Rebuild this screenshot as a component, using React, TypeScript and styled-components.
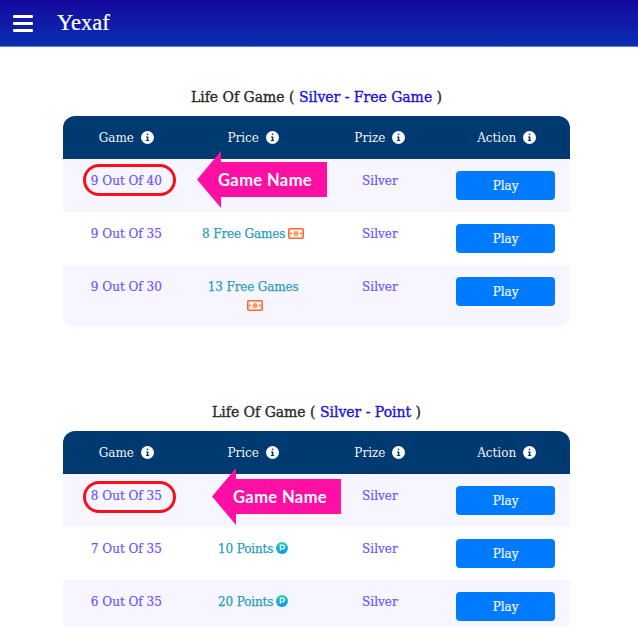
import styled, { createGlobalStyle } from "styled-components";

const GlobalStyle = createGlobalStyle`
  html, body {
    margin: 0;
    height: 100%;
    overflow: hidden;
    background: #fff;
    font-family: "DejaVu Serif", "Liberation Serif", serif;
  }
`;

const Header = styled.header`
  height: 46px;
  display: flex;
  align-items: center;
  gap: 24px;
  padding: 0 13px;
  color: #fff;
  background: linear-gradient(180deg, #13079d 0%, #0b30b2 100%);
  border-bottom: 1px solid #5f7fd6;
`;

const Burger = styled.div`
  width: 20px;
  display: flex;
  flex-direction: column;
  gap: 4px;
  span {
    height: 3px;
    border-radius: 1px;
    background: #fff;
  }
`;

const Brand = styled.div`
  font-family: "Liberation Serif", serif;
  font-size: 22.5px;
  line-height: 1;
  -webkit-text-stroke: 0.2px #fff;
`;

const Main = styled.main`
  padding: 40px 68px 0 63px;
  display: flex;
  flex-direction: column;
  gap: 75px;
`;

const Title = styled.h2`
  margin: 0 0 9px;
  height: 20px;
  font-size: 14px;
  font-weight: 500;
  line-height: 20px;
  letter-spacing: -0.02px;
  text-align: center;
  color: #2b2b2b;
  -webkit-text-stroke: 0.35px #2b2b2b;
  b {
    font-weight: 500;
    color: #1a12e0;
    -webkit-text-stroke: 0.35px #1a12e0;
  }
`;

const Table = styled.div`
  border-radius: 12px;
  overflow: hidden;
`;

const HeadRow = styled.div`
  height: 43px;
  display: grid;
  grid-template-columns: repeat(4, 1fr);
  align-items: center;
  background: #003a70;
  color: #f0f4f8;
  font-size: 12px;
`;

const HeadCell = styled.div`
  display: flex;
  justify-content: center;
  align-items: center;
  gap: 7px;
`;

const Row = styled.div<{ $odd: boolean; $height: number }>`
  position: relative;
  height: ${({ $height }) => $height}px;
  display: grid;
  grid-template-columns: repeat(4, 1fr);
  background: ${({ $odd }) => ($odd ? "#f7f5ff" : "#fff")};
  font-size: 12px;
`;

const Cell = styled.div`
  padding: 14px 10px 0;
  line-height: 16px;
  text-align: center;
  color: #6a55ff;
  -webkit-text-stroke: 0.2px #6a55ff;
`;

const GameCell = styled(Cell)`
  position: relative;
`;

const Price = styled(Cell)`
  padding-top: 13px;
  line-height: 19px;
  letter-spacing: -0.15px;
  color: #2a9cbb;
  -webkit-text-stroke: 0.25px #2a9cbb;
`;

const ActionCell = styled.div`
  display: flex;
  justify-content: center;
  padding: 12px 2px 0 0;
`;

const PlayButton = styled.button`
  width: 99px;
  height: 29px;
  border: none;
  border-radius: 4px;
  background: #007bff;
  color: #f2f7ff;
  font-family: inherit;
  font-size: 12px;
  padding: 0;
  -webkit-text-stroke: 0.2px #f2f7ff;
`;

const Oval = styled.div<{ $top: number }>`
  position: absolute;
  left: 20px;
  top: ${({ $top }) => $top}px;
  width: 87px;
  height: 26px;
  border: 3px solid #f5101a;
  border-radius: 16px;
`;

const Arrow = styled.div<{ $left: number; $width: number; $top: number }>`
  position: absolute;
  left: ${({ $left }) => $left}px;
  top: ${({ $top }) => $top}px;
  width: ${({ $width }) => $width}px;
  height: 57px;
  padding-left: 21px;
  box-sizing: border-box;
  display: flex;
  align-items: center;
  background: #ff0fa3;
  clip-path: polygon(0 50%, 24px 0, 24px 11px, 100% 11px, 100% 46px, 24px 46px, 24px 100%);
  color: #fff;
  font-family: "Lato", sans-serif;
  font-size: 16.5px;
  font-weight: 700;
  letter-spacing: 0.4px;
`;

const IconWrap = styled.svg`
  display: inline-block;
  vertical-align: -2px;
  flex: none;
`;

const InfoIcon = () => (
  <IconWrap width="13" height="13" viewBox="0 0 13 13">
    <circle cx="6.5" cy="6.5" r="6.5" fill="#fff" />
    <rect x="5.7" y="2.6" width="1.7" height="1.7" rx="0.8" fill="#003a70" />
    <path d="M5 5.5h2.4v3.6h.8v1H4.9v-1h.9V6.5H5z" fill="#003a70" />
  </IconWrap>
);

const MoneyIcon = () => (
  <IconWrap width="16" height="11" viewBox="0 0 16 11" style={{ marginLeft: 3, verticalAlign: -1 }}>
    <rect x="0.8" y="0.8" width="14.4" height="9.4" rx="1" fill="#fff3ec" stroke="#f96a2c" strokeWidth="1.6" />
    <circle cx="8" cy="5.5" r="2.5" fill="#f79a70" />
    <rect x="2.2" y="4.6" width="1.6" height="1.8" fill="#f96a2c" />
    <rect x="12.2" y="4.6" width="1.6" height="1.8" fill="#f96a2c" />
  </IconWrap>
);

const PointIcon = () => (
  <IconWrap width="12" height="12" viewBox="0 0 12 12" style={{ marginLeft: 3, verticalAlign: -1 }}>
    <defs>
      <linearGradient id="pointFill" x1="0" y1="0" x2="0" y2="1">
        <stop offset="0" stopColor="#22d3b0" />
        <stop offset="1" stopColor="#0a94e8" />
      </linearGradient>
    </defs>
    <circle cx="6" cy="6" r="6" fill="url(#pointFill)" />
    <path d="M4.4 9V3.2h2.2a1.8 1.8 0 0 1 0 3.6H5.4" fill="none" stroke="#fff" strokeWidth="1.2" />
  </IconWrap>
);

type GameRow = {
  name: string;
  price: string;
  icon: "money" | "point";
  height: number;
  arrow?: { left: number; width: number; top: number; ovalTop: number };
};

type Section = { type: string; rows: GameRow[] };

const sections: Section[] = [
  {
    type: "Silver - Free Game",
    rows: [
      { name: "9 Out Of 40", price: "", icon: "money", height: 53, arrow: { left: 134, width: 130, top: -8, ovalTop: 5 } },
      { name: "9 Out Of 35", price: "8 Free Games", icon: "money", height: 53 },
      { name: "9 Out Of 30", price: "13 Free Games", icon: "money", height: 62 },
    ],
  },
  {
    type: "Silver - Point",
    rows: [
      { name: "8 Out Of 35", price: "", icon: "point", height: 53, arrow: { left: 149, width: 129, top: -6, ovalTop: 7 } },
      { name: "7 Out Of 35", price: "10 Points", icon: "point", height: 53 },
      { name: "6 Out Of 35", price: "20 Points", icon: "point", height: 53 },
    ],
  },
];

const heads = ["Game", "Price", "Prize", "Action"];

export default function App() {
  return (
    <>
      <GlobalStyle />
      <Header>
        <Burger>
          <span />
          <span />
          <span />
        </Burger>
        <Brand>Yexaf</Brand>
      </Header>
      <Main>
        {sections.map((section) => (
          <section key={section.type}>
            <Title>
              Life Of Game ( <b>{section.type}</b> )
            </Title>
            <Table>
              <HeadRow>
                {heads.map((head) => (
                  <HeadCell key={head}>
                    {head} <InfoIcon />
                  </HeadCell>
                ))}
              </HeadRow>
              {section.rows.map((row, i) => (
                <Row key={row.name} $odd={i % 2 === 0} $height={row.height}>
                  <GameCell>
                    {row.name}
                    {row.arrow && <Oval $top={row.arrow.ovalTop} />}
                  </GameCell>
                  <Price>
                    {row.price}
                    {row.price && (row.icon === "money" ? <MoneyIcon /> : <PointIcon />)}
                  </Price>
                  <Cell>Silver</Cell>
                  <ActionCell>
                    <PlayButton>Play</PlayButton>
                  </ActionCell>
                  {row.arrow && (
                    <Arrow $left={row.arrow.left} $width={row.arrow.width} $top={row.arrow.top}>
                      Game Name
                    </Arrow>
                  )}
                </Row>
              ))}
            </Table>
          </section>
        ))}
      </Main>
    </>
  );
}
